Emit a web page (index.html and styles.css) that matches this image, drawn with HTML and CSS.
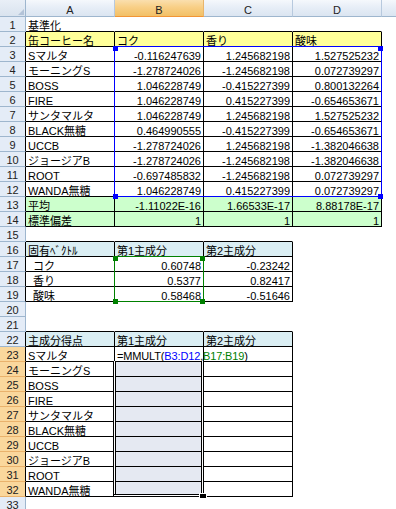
FILE: index.html
```html
<!DOCTYPE html>
<html lang="ja">
<head>
<meta charset="utf-8">
<title>基準化</title>
<link rel="stylesheet" href="styles.css">
</head>
<body>
<div class="sheet">
  <div class="r hdr">
    <div class="corner"><svg width="6" height="6" viewBox="0 0 6 6"><polygon points="6,0 6,6 0,6" fill="#b3c3d8"/></svg></div>
    <div class="ch">A</div><div class="ch sel">B</div><div class="ch">C</div><div class="ch">D</div><div class="ch e"></div>
  </div>
  <div class="r"><div class="n">1</div><div class="c u">基準化</div><div class="c u"></div><div class="c u"></div><div class="c u"></div><div class="c e"></div></div>
  <div class="r"><div class="n k">2</div><div class="c t y">缶コーヒー名</div><div class="c t y">コク</div><div class="c t y">香り</div><div class="c t y">酸味</div><div class="c e"></div></div>
  <div class="r"><div class="n k">3</div><div class="c t">Sマルタ</div><div class="c t v">-0.116247639</div><div class="c t v">1.245682198</div><div class="c t v">1.527525232</div><div class="c e"></div></div>
  <div class="r"><div class="n k">4</div><div class="c t">モーニングS</div><div class="c t v">-1.278724026</div><div class="c t v">-1.245682198</div><div class="c t v">0.072739297</div><div class="c e"></div></div>
  <div class="r"><div class="n k">5</div><div class="c t">BOSS</div><div class="c t v">1.046228749</div><div class="c t v">-0.415227399</div><div class="c t v">0.800132264</div><div class="c e"></div></div>
  <div class="r"><div class="n k">6</div><div class="c t">FIRE</div><div class="c t v">1.046228749</div><div class="c t v">0.415227399</div><div class="c t v">-0.654653671</div><div class="c e"></div></div>
  <div class="r"><div class="n k">7</div><div class="c t">サンタマルタ</div><div class="c t v">1.046228749</div><div class="c t v">1.245682198</div><div class="c t v">1.527525232</div><div class="c e"></div></div>
  <div class="r"><div class="n k">8</div><div class="c t">BLACK無糖</div><div class="c t v">0.464990555</div><div class="c t v">-0.415227399</div><div class="c t v">-0.654653671</div><div class="c e"></div></div>
  <div class="r"><div class="n k">9</div><div class="c t">UCCB</div><div class="c t v">-1.278724026</div><div class="c t v">1.245682198</div><div class="c t v">-1.382046638</div><div class="c e"></div></div>
  <div class="r"><div class="n k">10</div><div class="c t">ジョージアB</div><div class="c t v">-1.278724026</div><div class="c t v">-1.245682198</div><div class="c t v">-1.382046638</div><div class="c e"></div></div>
  <div class="r"><div class="n k">11</div><div class="c t">ROOT</div><div class="c t v">-0.697485832</div><div class="c t v">-1.245682198</div><div class="c t v">0.072739297</div><div class="c e"></div></div>
  <div class="r"><div class="n k">12</div><div class="c t">WANDA無糖</div><div class="c t v">1.046228749</div><div class="c t v">0.415227399</div><div class="c t v">0.072739297</div><div class="c e"></div></div>
  <div class="r"><div class="n k">13</div><div class="c t g">平均</div><div class="c t g v">-1.11022E-16</div><div class="c t g v">1.66533E-17</div><div class="c t g v">8.88178E-17</div><div class="c e"></div></div>
  <div class="r"><div class="n k">14</div><div class="c t g">標準偏差</div><div class="c t g v">1</div><div class="c t g v">1</div><div class="c t g v">1</div><div class="c e"></div></div>
  <div class="r"><div class="n">15</div><div class="c u"></div><div class="c u"></div><div class="c u"></div><div class="c"></div><div class="c e"></div></div>
  <div class="r"><div class="n k">16</div><div class="c t h">固有ﾍﾞｸﾄﾙ</div><div class="c t h">第1主成分</div><div class="c t h">第2主成分</div><div class="c"></div><div class="c e"></div></div>
  <div class="r"><div class="n k">17</div><div class="c t ind">コク</div><div class="c t v">0.60748</div><div class="c t v">-0.23242</div><div class="c"></div><div class="c e"></div></div>
  <div class="r"><div class="n k">18</div><div class="c t ind">香り</div><div class="c t v">0.5377</div><div class="c t v">0.82417</div><div class="c"></div><div class="c e"></div></div>
  <div class="r"><div class="n k">19</div><div class="c t ind">酸味</div><div class="c t v">0.58468</div><div class="c t v">-0.51646</div><div class="c"></div><div class="c e"></div></div>
  <div class="r"><div class="n">20</div><div class="c"></div><div class="c"></div><div class="c"></div><div class="c"></div><div class="c e"></div></div>
  <div class="r"><div class="n">21</div><div class="c u"></div><div class="c u"></div><div class="c u"></div><div class="c"></div><div class="c e"></div></div>
  <div class="r"><div class="n k">22</div><div class="c t h">主成分得点</div><div class="c t h">第1主成分</div><div class="c t h">第2主成分</div><div class="c"></div><div class="c e"></div></div>
  <div class="r"><div class="n k o">23</div><div class="c t">Sマルタ</div><div class="c t fx">=MMULT(<span class="rb">B3:D12</span>,<span class="rg">B17:B19</span>)</div><div class="c t"></div><div class="c"></div><div class="c e"></div></div>
  <div class="r"><div class="n k o">24</div><div class="c t">モーニングS</div><div class="c t s"></div><div class="c t"></div><div class="c"></div><div class="c e"></div></div>
  <div class="r"><div class="n k o">25</div><div class="c t">BOSS</div><div class="c t s"></div><div class="c t"></div><div class="c"></div><div class="c e"></div></div>
  <div class="r"><div class="n k o">26</div><div class="c t">FIRE</div><div class="c t s"></div><div class="c t"></div><div class="c"></div><div class="c e"></div></div>
  <div class="r"><div class="n k o">27</div><div class="c t">サンタマルタ</div><div class="c t s"></div><div class="c t"></div><div class="c"></div><div class="c e"></div></div>
  <div class="r"><div class="n k o">28</div><div class="c t">BLACK無糖</div><div class="c t s"></div><div class="c t"></div><div class="c"></div><div class="c e"></div></div>
  <div class="r"><div class="n k o">29</div><div class="c t">UCCB</div><div class="c t s"></div><div class="c t"></div><div class="c"></div><div class="c e"></div></div>
  <div class="r"><div class="n k o">30</div><div class="c t">ジョージアB</div><div class="c t s"></div><div class="c t"></div><div class="c"></div><div class="c e"></div></div>
  <div class="r"><div class="n k o">31</div><div class="c t">ROOT</div><div class="c t s"></div><div class="c t"></div><div class="c"></div><div class="c e"></div></div>
  <div class="r"><div class="n k o">32</div><div class="c t">WANDA無糖</div><div class="c t s"></div><div class="c t"></div><div class="c"></div><div class="c e"></div></div>
  <div class="r"><div class="n">33</div><div class="c"></div><div class="c"></div><div class="c"></div><div class="c"></div><div class="c e"></div></div>

  <svg class="ov" width="396" height="509" viewBox="0 0 396 509" shape-rendering="crispEdges">
    <rect x="114.5" y="46.5" width="267" height="150" fill="none" stroke="#0000ff"/>
    <rect x="113" y="46" width="5" height="5" fill="#0000ff"/>
    <rect x="378" y="46" width="5" height="5" fill="#0000ff"/>
    <rect x="113" y="194" width="5" height="5" fill="#0000ff"/>
    <rect x="378" y="194" width="5" height="5" fill="#0000ff"/>
    <rect x="114.5" y="256.5" width="89" height="45" fill="none" stroke="#008000"/>
    <rect x="113" y="256" width="5" height="5" fill="#008000"/>
    <rect x="200" y="256" width="5" height="5" fill="#008000"/>
    <rect x="113" y="299" width="5" height="5" fill="#008000"/>
    <rect x="200" y="299" width="5" height="5" fill="#008000"/>
    <rect x="113" y="361" width="3" height="136" fill="#000"/>
    <rect x="114" y="361" width="1" height="135" fill="#fff"/>
    <rect x="201" y="361" width="3" height="136" fill="#000"/>
    <rect x="202" y="361" width="1" height="135" fill="#fff"/>
    <rect x="113" y="494" width="91" height="3" fill="#000"/>
    <rect x="114" y="495" width="89" height="1" fill="#fff"/>
    <rect x="199" y="493" width="8" height="6" fill="#fff"/>
    <rect x="200" y="494" width="6" height="4" fill="#000"/>
  </svg>
</div>
</body>
</html>
```

FILE: styles.css
```css
html, body {
  margin: 0;
  padding: 0;
  background: #fff;
}

.sheet {
  position: relative;
  width: 396px;
  height: 509px;
  overflow: hidden;
  font-family: "Liberation Sans", "Noto Sans CJK JP", sans-serif;
  font-size: 11px;
  color: #000;
}

.r {
  display: flex;
  height: 15px;
}

.r.hdr {
  height: 17px;
}

.corner {
  flex: none;
  width: 26px;
  height: 17px;
  box-sizing: border-box;
  border-right: 1px solid #9eb6ce;
  border-bottom: 1px solid #9eb6ce;
  background: linear-gradient(#e9eff7, #d9e3ef);
  display: flex;
  align-items: flex-end;
  justify-content: flex-end;
  padding: 0 1px 1px 0;
}

.corner svg {
  display: block;
}

.ch {
  flex: none;
  width: 89px;
  height: 17px;
  box-sizing: border-box;
  border-right: 1px solid #b7c9de;
  border-bottom: 1px solid #9eb6ce;
  background: linear-gradient(#f5f8fc 0%, #e7eef7 45%, #dbe5f1 100%);
  text-align: center;
  padding-top: 3px;
  line-height: 14px;
  color: #222;
}

.ch.sel {
  background: linear-gradient(#fadfae 0%, #f8cf86 45%, #f2c066 100%);
  border-bottom-color: #f29536;
  border-right-color: #e8b56c;
}

.ch.e {
  flex: 1;
  width: auto;
  border-right: none;
}

.n {
  flex: none;
  width: 26px;
  height: 15px;
  box-sizing: border-box;
  background: #e4ecf7;
  border-right: 1px solid #9eb6ce;
  border-bottom: 1px solid #9eb6ce;
  text-align: center;
  padding-top: 1px;
  line-height: 14px;
  color: #222;
}

.n.k {
  border-right-color: #000;
}

.n.o {
  background: #fad79c;
  border-bottom-color: #eab26c;
}

.c {
  flex: none;
  width: 89px;
  height: 15px;
  box-sizing: border-box;
  border-right: 1px solid transparent;
  border-bottom: 1px solid transparent;
  padding: 2px 2px 0 2px;
  line-height: 14px;
  white-space: nowrap;
}

.c.e {
  flex: 1;
  width: auto;
}

.c.u {
  border-bottom-color: #000;
}

.c.t {
  border-right-color: #000;
  border-bottom-color: #000;
}

.c.v {
  text-align: right;
}

.c.ind {
  padding-left: 7px;
}

.c.fx {
  letter-spacing: -0.15px;
}

.c.y {
  background: #ffff99;
}

.c.g {
  background: #ccffcc;
}

.c.h {
  background: #daeef3;
}

.c.s {
  background: #e5e9f2;
}

.rb {
  color: #0000ff;
}

.rg {
  color: #008000;
}

.ov {
  position: absolute;
  left: 0;
  top: 0;
  pointer-events: none;
}
```
